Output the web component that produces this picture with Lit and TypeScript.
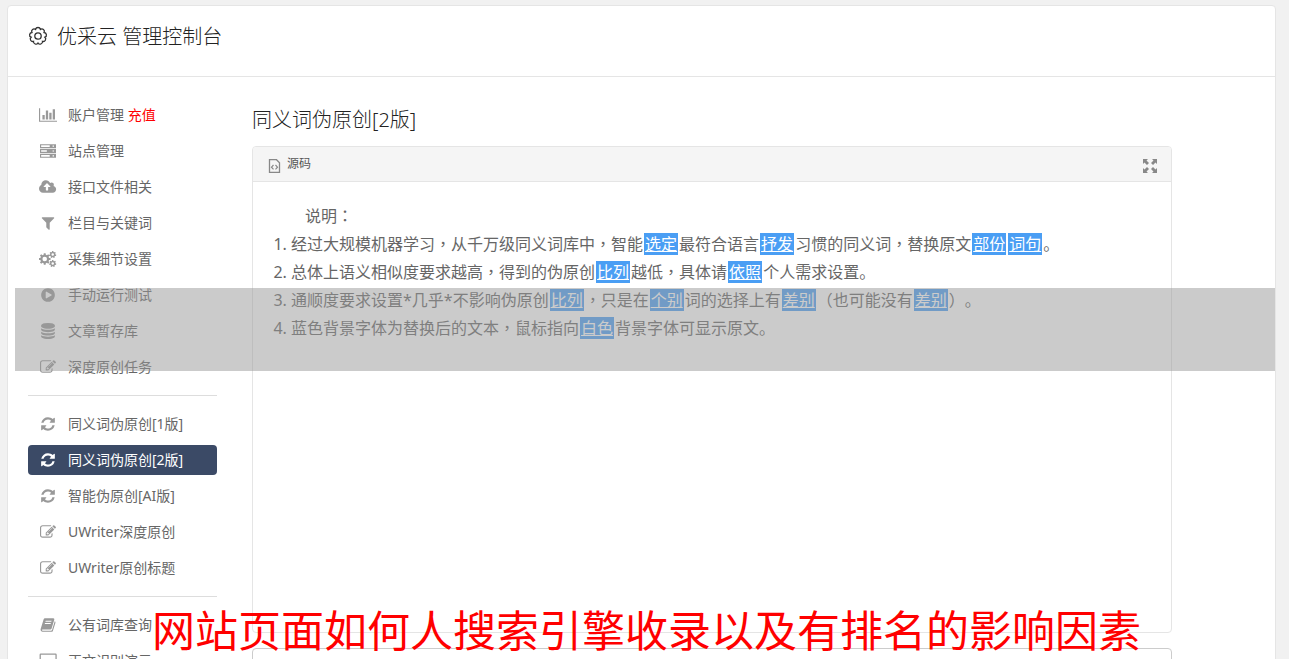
import { LitElement, html, css, svg } from "lit";
import { customElement, property } from "lit/decorators.js";
import { classMap } from "lit/directives/class-map.js";

// Outline of a toothed wheel, centred on (cx, cy).
function gear(cx: number, cy: number, r: number, teeth: number, hole: number): string {
  const inner = r * 0.76;
  const step = (Math.PI * 2) / teeth;
  const pts: string[] = [];
  for (let i = 0; i < teeth; i++) {
    const a = i * step - Math.PI / 2;
    for (const [d, rad] of [[-0.32, inner], [-0.2, r], [0.2, r], [0.32, inner]]) {
      const t = a + d * step;
      pts.push(`${(cx + rad * Math.cos(t)).toFixed(2)} ${(cy + rad * Math.sin(t)).toFixed(2)}`);
    }
  }
  return `M${pts.join("L")}z M${cx - hole} ${cy}a${hole} ${hole} 0 1 0 ${hole * 2} 0a${hole} ${hole} 0 1 0 ${-hole * 2} 0z`;
}

// Scalloped ring used beside the console title.
function scallop(): string {
  const n = 9;
  let d = "";
  for (let i = 0; i <= n; i++) {
    const a = (i / n) * Math.PI * 2 - Math.PI / 2 + Math.PI / n;
    const x = (10 + 7 * Math.cos(a)).toFixed(2);
    const y = (10 + 7 * Math.sin(a)).toFixed(2);
    d += i === 0 ? `M${x} ${y}` : `A2.45 2.45 0 0 1 ${x} ${y}`;
  }
  return d + "z";
}

const disc =
  "q237 0 443-43t325-127v170q0 69-103 128t-280 93.500-385 34.500-385-34.500-280-93.500-103-128v-170q119 84 325 127t443 43z";

const ICONS: Record<string, { w: number; d: string }> = {
  chart: {
    w: 2048,
    d: "M640 896v512h-256v-512h256zm384-512v1024h-256v-1024h256zm1024 1152v128h-2048v-1536h128v1408h1920zm-640-896v768h-256v-768h256zm384-384v1152h-256v-1152h256z",
  },
  server: {
    w: 1792,
    d: "M0 128h1792v448H0zM128 256v192h960V256zM1408 288v128h160V288zM0 672h1792v448H0zM128 800v192h640V800zM1408 832v128h160V832zM0 1216h1792v448H0zM128 1344v192h960v-192zM1408 1376v128h160v-128z",
  },
  cloud: {
    w: 1920,
    d: "M1280 864q0-14-9-23l-352-352q-9-9-23-9t-23 9l-351 351q-10 12-10 24 0 14 9 23t23 9h224v352q0 13 9.500 22.500t22.500 9.500h192q13 0 22.500-9.500t9.500-22.500v-352h224q13 0 22.500-9.500t9.500-22.500zm640 288q0 159-112.500 271.500t-271.500 112.500h-1088q-185 0-316.500-131.500t-131.500-316.500q0-130 70-240t188-165q-2-30-2-43 0-212 150-362t362-150q156 0 285.500 87t188.500 231q71-62 166-62 106 0 181 75t75 181q0 76-41 138 130 31 213.500 135.500t83.500 238.500z",
  },
  filter: {
    w: 1792,
    d: "M1595 295q17 41-14 70l-493 493v742q0 42-39 59-13 5-25 5-27 0-45-19l-256-256q-19-19-19-45v-486l-493-493q-31-29-14-70 17-39 59-39h1280q42 0 59 39z",
  },
  cogs: {
    w: 1920,
    d: gear(640, 896, 660, 8, 256) + gear(1536, 400, 400, 7, 140) + gear(1536, 1400, 400, 7, 140),
  },
  play: {
    w: 1792,
    d: "M896 128q209 0 385.500 103t279.500 279.500 103 385.500-103 385.500-279.500 279.500-385.500 103-385.500-103-279.500-279.500-103-385.500 103-385.500 279.500-279.500 385.500-103zm384 823q32-18 32-55t-32-55l-544-320q-31-19-64-1-32 19-32 56v640q0 37 32 56 16 8 32 8 17 0 32-9z",
  },
  database: {
    w: 1792,
    d: `M896 768${disc}M896 1536${disc}M896 1152${disc}M896 0q208 0 385 34.500t280 93.500 103 128v128q0 69-103 128t-280 93.500-385 34.500-385-34.500-280-93.500-103-128v-128q0-69 103-128t280-93.500 385-34.500z`,
  },
  edit: {
    w: 1792,
    d: "M888 1184l116-116-152-152-116 116v56h96v96h56zm440-720q-16-16-33 1l-350 350q-17 17-1 33t33-1l350-350q17-17 1-33zm80 594v190q0 119-84.500 203.500t-203.500 84.500h-832q-119 0-203.500-84.500t-84.500-203.500v-832q0-119 84.500-203.500t203.500-84.500h832q63 0 117 25 15 7 18 23 3 17-9 29l-49 49q-14 14-32 8-23-6-45-6h-832q-66 0-113 47t-47 113v832q0 66 47 113t113 47h832q66 0 113-47t47-113v-126q0-13 9-22l64-64q15-15 35-7t20 29zm-96-738l288 288-672 672h-288v-288zm444 132l-92 92-288-288 92-92q28-28 68-28t68 28l152 152q28 28 28 68t-28 68z",
  },
  refresh: {
    w: 1792,
    d: "M1639 1056q0 5-1 7-64 268-268 434.500t-478 166.500q-146 0-282.500-55t-243.500-157l-129 129q-19 19-45 19t-45-19-19-45v-448q0-26 19-45t45-19h448q26 0 45 19t19 45-19 45l-137 137q71 66 161 102t187 36q134 0 250-65t186-179q11-17 53-117 8-23 30-23h192q13 0 22.500 9.500t9.500 22.500zm25-800v448q0 26-19 45t-45 19h-448q-26 0-45-19t-19-45 19-45l138-138q-148-137-349-137-134 0-250 65t-186 179q-11 17-53 117-8 23-30 23h-199q-13 0-22.500-9.500t-9.500-22.500v-7q65-268 270-434.500t480-166.500q146 0 284 55.500t245 156.500l130-129q19-19 45-19t45 19 19 45z",
  },
  book: {
    w: 1792,
    d: "M560 150H1500Q1640 160 1600 300L1290 1320Q1255 1410 1150 1410H300Q190 1420 215 1490Q235 1540 310 1540H1230Q1320 1540 1350 1460L1650 480Q1760 540 1730 640L1440 1560Q1400 1664 1270 1664H270Q110 1650 70 1490Q50 1400 90 1300L400 280Q440 160 560 150zM640 420L605 530H1265L1300 420zM560 670L525 780H1185L1220 670z",
  },
  laptop: {
    w: 2048,
    d: "M200 64H1850Q1984 76 1984 206V1664H64V206Q64 76 200 64zM208 208V1536H1840V208z",
  },
};

@customElement("app-icon")
class AppIcon extends LitElement {
  @property() name = "";

  static styles = css`
    :host {
      display: block;
      flex: none;
      line-height: 0;
    }
    svg {
      display: block;
      height: 16px;
      fill: currentColor;
      fill-rule: evenodd;
    }
  `;

  render() {
    const icon = ICONS[this.name];
    return html`<svg viewBox="0 0 ${icon.w} 1792" aria-hidden="true">${svg`<path d=${icon.d}></path>`}</svg>`;
  }
}

interface Item {
  icon: string;
  label: string;
  extra?: string;
  active?: boolean;
}

const GROUPS: Item[][] = [
  [
    { icon: "chart", label: "账户管理", extra: "充值" },
    { icon: "server", label: "站点管理" },
    { icon: "cloud", label: "接口文件相关" },
    { icon: "filter", label: "栏目与关键词" },
    { icon: "cogs", label: "采集细节设置" },
    { icon: "play", label: "手动运行测试" },
    { icon: "database", label: "文章暂存库" },
    { icon: "edit", label: "深度原创任务" },
  ],
  [
    { icon: "refresh", label: "同义词伪原创[1版]" },
    { icon: "refresh", label: "同义词伪原创[2版]", active: true },
    { icon: "refresh", label: "智能伪原创[AI版]" },
    { icon: "edit", label: "UWriter深度原创" },
    { icon: "edit", label: "UWriter原创标题" },
  ],
  [
    { icon: "book", label: "公有词库查询" },
    { icon: "laptop", label: "正文识别演示" },
  ],
];

// Odd entries are the replaced words.
const NOTES: string[][] = [
  ["经过大规模机器学习，从千万级同义词库中，智能", "选定", "最符合语言", "抒发", "习惯的同义词，替换原文", "部份", "", "词句", "。"],
  ["总体上语义相似度要求越高，得到的伪原创", "比列", "越低，具体请", "依照", "个人需求设置。"],
  ["通顺度要求设置*几乎*不影响伪原创", "比列", "，只是在", "个别", "词的选择上有", "差别", "（也可能没有", "差别", "）。"],
  ["蓝色背景字体为替换后的文本，鼠标指向", "白色", "背景字体可显示原文。"],
];

// Commas and colons sit in the middle of their cell.
function centred(text: string) {
  return text.split(/([，：])/).map((t, i) => (i % 2 ? html`<span class="mark">${t}</span>` : t));
}

@customElement("app-root")
class AppRoot extends LitElement {
  static styles = css`
    :host {
      display: block;
      position: relative;
      box-sizing: border-box;
      height: 100vh;
      overflow: hidden;
      padding: 5px 13px 0 7px;
      background: #f1f1f1;
      color: #666;
      font-family: "Noto Sans", "Noto Sans CJK SC", sans-serif;
      font-size: 14px;
      font-weight: 400;
      line-height: 20px;
      text-spacing-trim: space-all;
    }
    .card {
      background: #fff;
      border: 1px solid #e5e5e5;
      border-radius: 4px;
      min-height: 100%;
    }
    .top {
      display: flex;
      align-items: center;
      gap: 9px;
      height: 62px;
      padding: 0 20px 8px;
      border-bottom: 1px solid #e5e5e5;
      color: #333;
    }
    .top svg {
      width: 20px;
      height: 20px;
      margin-bottom: 2px;
      fill: none;
      stroke: currentColor;
    }
    h1,
    h2 {
      margin: 0;
      color: #222;
      font-size: 20px;
      font-weight: 300;
      line-height: 28px;
    }
    .columns {
      display: flex;
      gap: 35px;
      padding: 23px 103px 0 20px;
    }
    nav {
      flex: none;
      width: 189px;
    }
    ul {
      display: grid;
      gap: 6px;
      margin: 0;
      padding: 0;
      list-style: none;
    }
    ul + ul {
      margin-top: 13px;
      padding-top: 13px;
      border-top: 1px solid #ddd;
    }
    .item {
      display: flex;
      align-items: center;
      gap: 10px;
      height: 30px;
      padding: 0 10px;
      border-radius: 4px;
      color: #666;
      text-decoration: none;
      white-space: nowrap;
    }
    .glyph {
      display: flex;
      justify-content: center;
      width: 20px;
      color: #999;
    }
    .extra {
      color: #f00;
    }
    .active,
    .active .glyph {
      color: #fff;
    }
    .active {
      background: #3b4a66;
    }
    main {
      flex: 1;
      min-width: 0;
      padding-top: 6px;
    }
    .panel {
      margin-top: 12px;
      border: 1px solid #e5e5e5;
      border-radius: 4px;
      overflow: hidden;
    }
    .bar {
      display: flex;
      align-items: center;
      gap: 6px;
      height: 34px;
      padding: 0 14px 0 15px;
      border-bottom: 1px solid #e5e5e5;
      background: #f5f5f5;
      color: #555;
      font-size: 12px;
    }
    .source {
      width: 13px;
      height: 14px;
      margin-top: 4px;
      fill: none;
      stroke: #888;
    }
    button {
      display: block;
      margin: 4px 0 0 auto;
      padding: 0;
      border: 0;
      background: none;
      color: #888;
    }
    button svg {
      display: block;
      width: 14px;
      height: 14px;
      fill: currentColor;
    }
    .text {
      min-height: 430px;
      padding: 20px 20px 0;
      font-size: 16px;
      line-height: 28px;
    }
    p {
      margin: 0;
      text-indent: 2em;
    }
    ol {
      margin: 0;
      padding-left: 18px;
    }
    .mark {
      font-family: "Noto Sans CJK TC", sans-serif;
      line-height: 1;
    }
    .word {
      margin: 0 1px;
      padding: 0 1px;
      background: #4a9ef4;
      color: #fff;
      text-decoration: underline;
    }
    .result {
      height: 120px;
      margin-top: 15px;
      border: 1px solid #ccc;
      border-radius: 4px;
    }
    .band {
      position: absolute;
      top: 288px;
      left: 15px;
      right: 14px;
      height: 83px;
      background: rgba(151, 151, 151, 0.5);
      pointer-events: none;
    }
    .caption {
      position: absolute;
      left: 152px;
      bottom: 0;
      color: #f00;
      font-size: 43px;
      line-height: 56px;
      white-space: nowrap;
      pointer-events: none;
    }
  `;

  private item(i: Item) {
    return html`<li>
      <a class=${classMap({ item: true, active: !!i.active })} href="#">
        <span class="glyph"><app-icon name=${i.icon}></app-icon></span>
        <span>${i.label}${i.extra ? html` <span class="extra">${i.extra}</span>` : ""}</span>
      </a>
    </li>`;
  }

  private note(parts: string[]) {
    return html`<li>${parts.map((t, i) => (i % 2 ? html`<a class="word" href="#">${t}</a>` : centred(t)))}</li>`;
  }

  render() {
    return html`
      <div class="card">
        <header class="top">
          <svg viewBox="0 0 20 20" aria-hidden="true">
            <path d=${scallop()} stroke-width="1.3"></path>
            <circle cx="10" cy="10" r="3.2" stroke-width="1.3"></circle>
          </svg>
          <h1>优采云 管理控制台</h1>
        </header>
        <div class="columns">
          <nav>${GROUPS.map((g) => html`<ul>${g.map((i) => this.item(i))}</ul>`)}</nav>
          <main>
            <h2>同义词伪原创[2版]</h2>
            <section class="panel">
              <div class="bar">
                <svg class="source" viewBox="0 0 13 14" aria-hidden="true">
                  <path d="M1.500 .7H8.500L11.500 3.700V13.300H1.500z" stroke-width="1.300"></path>
                  <path d="M5.500 6L3.500 8.200L5.500 10.400M7.500 6L9.500 8.200L7.500 10.400" stroke-width="1.200"></path>
                </svg>
                <span>源码</span>
                <button type="button" aria-label="全屏">
                  <svg viewBox="0 0 14 14">
                    <path
                      d="M0 0H5L3.500 1.500L6 4L4 6L1.500 3.500L0 5zM14 0V5L12.500 3.500L10 6L8 4L10.500 1.500L9 0zM0 14V9L1.500 10.500L4 8L6 10L3.500 12.500L5 14zM14 14H9L10.500 12.500L8 10L10 8L12.500 10.500L14 9z"
                    ></path>
                  </svg>
                </button>
              </div>
              <div class="text">
                <p>${centred("说明：")}</p>
                <ol>${NOTES.map((n) => this.note(n))}</ol>
              </div>
            </section>
            <section class="result"></section>
          </main>
        </div>
      </div>
      <div class="band"></div>
      <div class="caption">网站页面如何人搜索引擎收录以及有排名的影响因素</div>
    `;
  }
}
